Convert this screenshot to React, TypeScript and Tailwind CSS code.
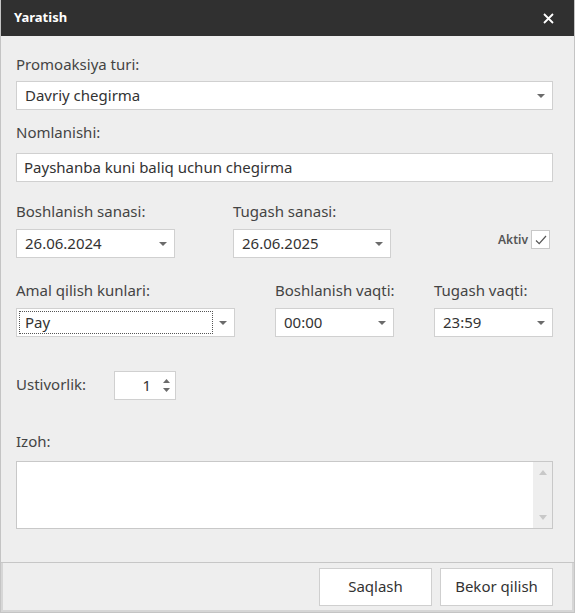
import React from 'react';

const font = { fontFamily: '"Noto Sans", "Open Sans", sans-serif' };

function Caret() {
  return (
    <svg width="8" height="4" viewBox="0 0 8 4" className="shrink-0">
      <path d="M0 0 L8 0 L4 4 Z" fill="#6b6b6b" />
    </svg>
  );
}

function Select({ value, className = '', focused = false }: { value: string; className?: string; focused?: boolean }) {
  return (
    <div className={`flex h-[29px] items-center border border-[#d0d0d0] bg-white pr-[7px] ${className}`}>
      <div
        className={`ml-[2px] mr-[6px] flex h-[23px] flex-1 items-center pl-[5px] text-[15px] text-[#333] ${
          focused ? 'border border-dotted border-[#555]' : 'border border-transparent'
        }`}
      >
        {value}
      </div>
      <Caret />
    </div>
  );
}

function Label({ children, className = '' }: { children: React.ReactNode; className?: string }) {
  return <div className={`whitespace-nowrap text-[15px] leading-[20px] text-[#444] ${className}`}>{children}</div>;
}

export default function App() {
  return (
    <div className="flex h-[613px] w-[575px] flex-col border-x border-b border-[#c4c4c4] bg-[#eeeeee]" style={font}>
      {/* title bar */}
      <div className="flex h-[36px] shrink-0 items-center justify-between bg-[#303030] pl-[13px] pr-[20px]">
        <span className="text-[13px] font-bold text-white">Yaratish</span>
        <svg width="11" height="11" viewBox="0 0 11 11">
          <path d="M1 1 L10 10 M10 1 L1 10" stroke="#ffffff" strokeWidth="1.8" />
        </svg>
      </div>

      {/* body */}
      <div className="flex flex-1 flex-col pl-[15px] pr-[21px] pt-[18px]">
        <Label>Promoaksiya turi:</Label>
        <Select value="Davriy chegirma" className="mt-[7px]" />

        <Label className="mt-[12px]">Nomlanishi:</Label>
        <div className="mt-[11px] flex h-[29px] items-center border border-[#d0d0d0] bg-white pl-[7px] text-[15px] text-[#333]">
          Payshanba kuni baliq uchun chegirma
        </div>

        <div className="mt-[19px] flex items-end">
          <div className="w-[159px] shrink-0">
            <Label>Boshlanish sanasi:</Label>
            <Select value="26.06.2024" className="mt-[8px]" />
          </div>
          <div className="ml-[58px] w-[158px] shrink-0">
            <Label>Tugash sanasi:</Label>
            <Select value="26.06.2025" className="mt-[8px]" />
          </div>
          <div className="mb-[9px] ml-auto mr-[3px] flex items-center gap-[3px]">
            <span className="text-[12px] font-semibold text-[#555]">Aktiv</span>
            <div className="flex h-[19px] w-[19px] items-center justify-center border border-[#c8c8c8] bg-white">
              <svg width="12" height="10" viewBox="0 0 12 10">
                <path d="M1 5.5 L4.2 8.6 L11 1" stroke="#555" strokeWidth="1.2" fill="none" />
              </svg>
            </div>
          </div>
        </div>

        <div className="mt-[22px] flex">
          <div className="w-[219px] shrink-0">
            <Label>Amal qilish kunlari:</Label>
            <Select value="Pay" className="mt-[8px]" focused />
          </div>
          <div className="ml-[40px] w-[119px] shrink-0">
            <Label>Boshlanish vaqti:</Label>
            <Select value="00:00" className="mt-[8px]" />
          </div>
          <div className="ml-[40px] w-[119px] shrink-0">
            <Label>Tugash vaqti:</Label>
            <Select value="23:59" className="mt-[8px]" />
          </div>
        </div>

        <div className="mt-[34px] flex items-center">
          <Label className="mb-[3px] w-[98px]">Ustivorlik:</Label>
          <div className="flex h-[29px] w-[62px] items-center justify-end border border-[#d0d0d0] bg-white pr-[5px]">
            <span className="mr-[12px] text-[15px] text-[#333]">1</span>
            <div className="flex flex-col gap-[5px]">
              <svg width="7" height="4" viewBox="0 0 7 4">
                <path d="M0 4 L7 4 L3.5 0 Z" fill="#6b6b6b" />
              </svg>
              <svg width="7" height="4" viewBox="0 0 7 4">
                <path d="M0 0 L7 0 L3.5 4 Z" fill="#6b6b6b" />
              </svg>
            </div>
          </div>
        </div>

        <Label className="mt-[31px]">Izoh:</Label>
        <div className="mt-[10px] flex h-[68px] border border-[#c8c8c8] bg-white">
          <div className="flex-1" />
          <div className="flex w-[19px] flex-col items-center justify-between bg-[#eeeeee] py-[8px]">
            <svg width="8" height="5" viewBox="0 0 8 5">
              <path d="M0 5 L8 5 L4 0 Z" fill="#c8c8c8" />
            </svg>
            <svg width="8" height="5" viewBox="0 0 8 5">
              <path d="M0 0 L8 0 L4 5 Z" fill="#c8c8c8" />
            </svg>
          </div>
        </div>
      </div>

      {/* footer */}
      <div className="flex h-[50px] shrink-0 items-center justify-end gap-[8px] border-t border-[#c6c6c6] pb-[2px] pr-[21px] shadow-[inset_2px_-2px_0_#d6d6d6,inset_-2px_0_0_#d6d6d6]">
        <button className="h-[38px] w-[113px] border border-[#cfcfcf] bg-white text-[15px] text-[#333]">Saqlash</button>
        <button className="h-[38px] w-[113px] border border-[#cfcfcf] bg-white text-[15px] text-[#333]">Bekor qilish</button>
      </div>
    </div>
  );
}
